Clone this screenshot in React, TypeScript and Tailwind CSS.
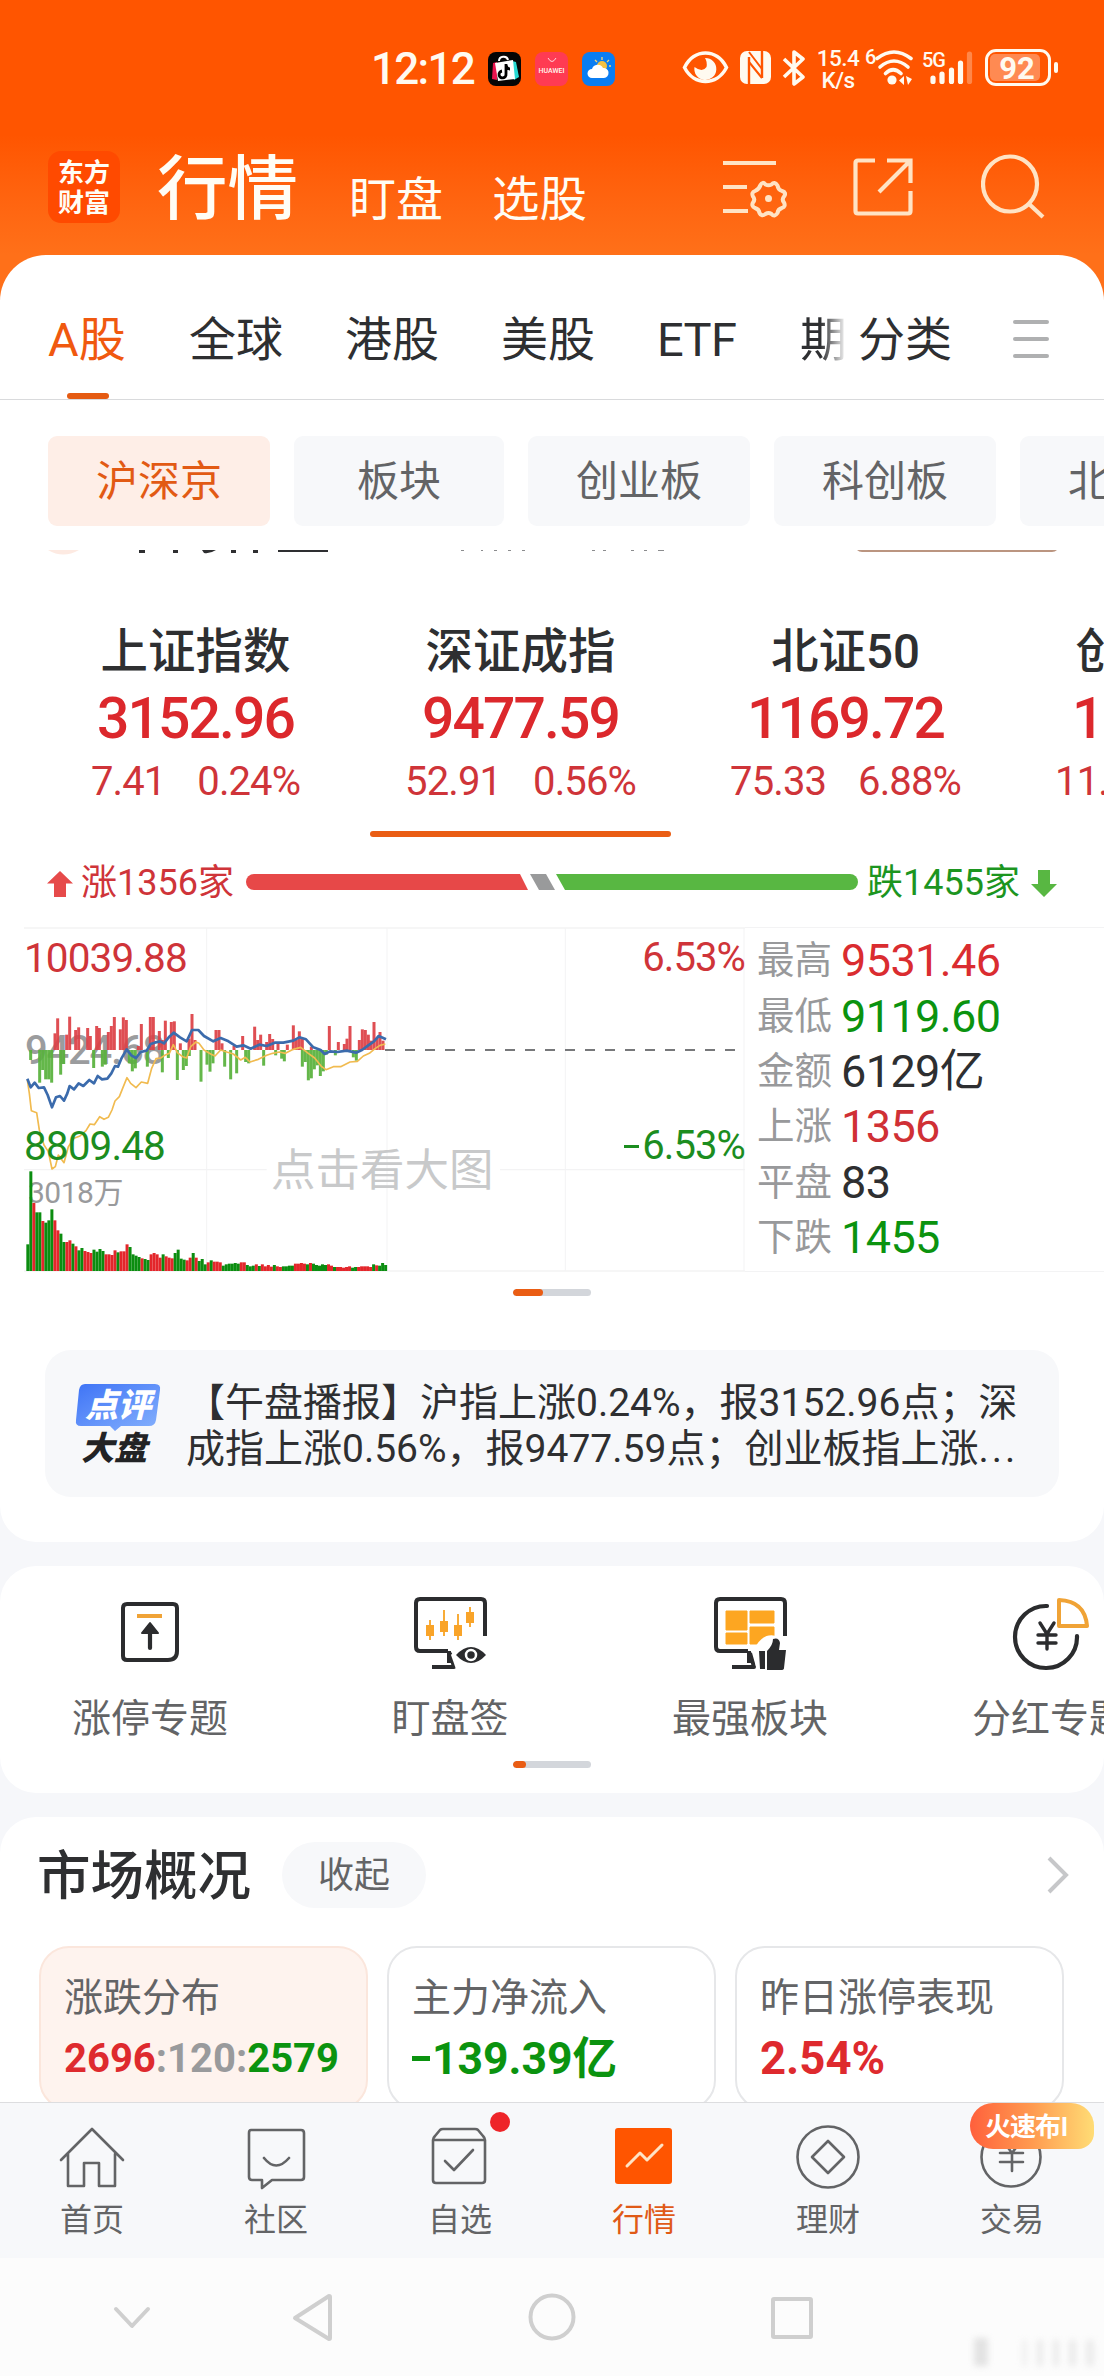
import React from "react";

/* ---------- data ---------- */

const tabs = ["全球", "港股", "美股"];

const indices = [
  { name: "上证指数", value: "3152.96", diff: "7.41", pct: "0.24%", active: false },
  { name: "深证成指", value: "9477.59", diff: "52.91", pct: "0.56%", active: true },
  { name: "北证50", value: "1169.72", diff: "75.33", pct: "6.88%", active: false },
  { name: "创业板指", value: "1866.07", diff: "11.35", pct: "0.61%", active: false },
];

const stats = [
  { label: "最高", value: "9531.46", tone: "text-[#da2c30]" },
  { label: "最低", value: "9119.60", tone: "text-[#0b930f]" },
  { label: "金额", value: "6129亿", tone: "text-[#2e2f31]" },
  { label: "上涨", value: "1356", tone: "text-[#d03035]" },
  { label: "平盘", value: "83", tone: "text-[#2e2f31]" },
  { label: "下跌", value: "1455", tone: "text-[#0b930f]" },
];

/* strength bars: [x, height]; chart units are thirds of a pixel */
const upBars: [number, number][] = [
  [165, 50], [173, 95], [200, 46], [209, 100], [227, 60], [236, 68], [263, 66], [271, 42], [290, 72], [298, 66],
  [325, 54], [334, 72], [343, 99], [361, 62], [370, 98], [379, 90], [415, 12], [424, 78], [451, 99], [460, 99],
  [478, 57], [487, 30], [496, 88], [514, 84], [523, 86], [541, 20], [567, 34], [576, 108], [585, 30], [648, 60],
  [657, 60], [666, 20], [702, 12], [728, 42], [764, 70], [773, 30], [782, 46], [800, 24], [809, 48], [818, 33],
  [834, 22], [862, 16], [880, 74], [889, 30], [898, 56], [907, 34], [934, 10], [988, 72], [1015, 24], [1033, 18],
  [1041, 34], [1050, 72], [1078, 30], [1087, 62], [1096, 60], [1105, 46], [1113, 28], [1122, 84], [1131, 36],
  [1140, 54], [1149, 28],
];
const downBars: [number, number][] = [
  [92, 30], [119, 98], [128, 60], [137, 88], [146, 88], [155, 98], [182, 74], [191, 42], [281, 54], [307, 50],
  [316, 44], [388, 40], [397, 64], [406, 55], [442, 50], [487, 67], [505, 24], [532, 90], [550, 60], [559, 48],
  [568, 18], [603, 95], [621, 44], [630, 65], [639, 40], [674, 50], [692, 88], [710, 70], [737, 36], [746, 40],
  [791, 47], [827, 16], [845, 26], [853, 34], [907, 50], [916, 36], [925, 91], [934, 85], [943, 58], [952, 46],
  [961, 78], [970, 64], [979, 14], [1006, 16], [1060, 22], [1069, 32],
];
const volumes = [
  80, 299, 204, 176, 176, 150, 145, 152, 185, 152, 122, 112, 87, 87, 92, 82, 74, 62, 69, 60, 57, 54, 64, 58, 66, 60, 50,
  50, 48, 62, 56, 59, 59, 80, 72, 50, 46, 42, 38, 36, 33, 50, 54, 50, 40, 50, 44, 40, 38, 54, 64, 37, 34, 32, 40, 54, 40,
  30, 36, 20, 26, 32, 28, 28, 26, 16, 20, 22, 22, 24, 22, 26, 26, 18, 14, 16, 20, 15, 20, 14, 18, 13, 18, 14, 12, 14, 14,
  16, 16, 22, 22, 24, 22, 20, 24, 22, 18, 16, 20, 18, 20, 16, 12, 12, 12, 10, 12, 14, 10, 12, 12, 14, 14, 14, 12, 20, 17,
  16, 24, 18,
];
const volumeColors =
  "GGRGGRGGGRRGGRRGRGGRRRGGGGRRRRGRRRGGGGRGGRRRRGRRRGGGGRRGRGGGRGRRRGGGGGGRRGGGRGRRRRGRRGGGGRRRRGRGGGGGRRGRRRRRGGRRRRRGRGGG";

const shortcuts = [
  { label: "涨停专题", icon: <LimitUpIcon /> },
  { label: "盯盘签", icon: <WatchIcon /> },
  { label: "最强板块", icon: <SectorIcon /> },
  { label: "分红专题", icon: <DividendIcon /> },
];

/* ---------- status bar ---------- */

function StatusBar() {
  return (
    <div className="flex h-[136px] items-start text-[#fffaf0]">
      <div className="ml-[371px] mt-[42px] w-[117px] whitespace-nowrap text-[44px] font-medium leading-[54px] tracking-[-1.7px]">12:12</div>
      <svg className="mt-[52px] h-[34px] w-[33px]" viewBox="0 0 33 34">
        <rect width="33" height="34" rx="8" fill="#050505" />
        <path d="M5 11l4-1v18l-5-1z" fill="#e9134f" />
        <path d="M24 9l4 1 3 15-5 3z" fill="#26d9d3" />
        <path d="M7 11l18-3 2 19-17 2z" fill="#fff" />
        <path d="M11 9c0-5 8-6 9-1" fill="none" stroke="#fff" strokeWidth="2" />
        <path d="M18 12v10a3.500 3.500 0 1 1-4-3M18 13q1 4 4 4" fill="none" stroke="#000" strokeWidth="2.800" />
      </svg>
      <div className="ml-[14px] mt-[52px] flex h-[34px] w-[33px] flex-col items-center rounded-lg bg-[#ff3b53]">
        <svg className="mt-[5px] h-[7px] w-[12px]" viewBox="0 0 12 7">
          <path d="M2 1q4 7 8 0" fill="none" stroke="#ffd5dc" />
        </svg>
        <span className="mt-[3px] text-[7px] font-medium leading-[9px]">HUAWEI</span>
      </div>
      <svg className="ml-[14px] mt-[52px] h-[34px] w-[33px]" viewBox="0 0 33 34">
        <rect width="33" height="34" rx="8" fill="#0a7df2" />
        <path d="M20 5v3M13 8l2 2M27 8l-2 2M29 14h-2M26 20l-1-1" stroke="#f5d77a" strokeWidth="1.300" />
        <circle cx="20" cy="14" r="5" fill="#f5c243" />
        <path d="M10 26a4.500 4.500 0 0 1 0-9 6 6 0 0 1 11-1 5 5 0 0 1 1 10z" fill="#fff" />
      </svg>
      <svg className="ml-[67px] mt-[51px] h-[33px] w-[47px]" viewBox="0 0 47 33">
        <path d="M2.500 16.500C12-3 35-3 44.500 16.500 35 35 12 35 2.500 16.500z" fill="none" stroke="currentColor" strokeWidth="3.500" />
        <path d="M23 7a11 11 0 1 1-10.500 9q8 6 12 0 1-5-1.500-9z" fill="currentColor" />
      </svg>
      <svg className="ml-[11px] mt-[51px] h-[33px] w-[31px]" viewBox="0 0 31 33">
        <rect width="31" height="33" rx="7" fill="currentColor" />
        <path d="M9 6v27M22 0v27" stroke="#ff5500" strokeWidth="2.400" />
        <path d="M9 1l13 17M9 11l13 16" stroke="#ff5500" strokeWidth="2" />
      </svg>
      <svg className="ml-[11px] mt-[50px] h-[36px] w-[24px]" viewBox="0 0 24 36">
        <path d="M2 9l19 18-9 7V2l9 7L2 27" fill="none" stroke="currentColor" strokeWidth="3.600" strokeLinejoin="round" />
      </svg>
      <div className="ml-[9px] mt-[47px] w-[46px] text-center text-[22.500px] font-medium leading-[22px] tracking-[-0.500px]">
        15.4
        <br />
        K/s
      </div>
      <div className="ml-[4px] mt-[46px] w-[10px] text-[20px] font-medium leading-[22px] tracking-[-1px]">6</div>
      <svg className="mt-[49px] h-[36px] w-[40px]" viewBox="0 0 40 36">
        <g fill="none" stroke="currentColor" strokeWidth="3.600" strokeLinecap="round">
          <path d="M2 9.500Q19-3.500 36 9.500" />
          <path d="M5 18Q19 6 33 18" />
          <path d="M10.500 24.500Q18 17 26 24.500" />
        </g>
        <circle cx="17" cy="31" r="4.600" fill="currentColor" />
        <path d="M29 27v9l-5-4.500zM31 27l6 3-4 6z" fill="currentColor" />
      </svg>
      <div className="relative ml-[7px] mt-[50px] h-[36px] w-[52px]">
        <span className="absolute left-0 top-[-1px] text-[20px] font-medium leading-[22px] tracking-[-1px]">5G</span>
        <svg className="h-[36px] w-[52px]" viewBox="0 0 52 36">
          <g stroke="currentColor" strokeWidth="5.200" strokeLinecap="round">
            <path d="M11 28v3.500M20 24v7.500M29.500 20v11.500M38.500 13v18.500" />
            <path d="M47.500 4v27.500" opacity="0.300" />
          </g>
        </svg>
      </div>
      <div className="ml-[11px] mt-[49px] flex h-[37px] w-[66px] rounded-[11px] border-[3px] border-[#fffaf0] p-[2px]">
        <div className="h-full w-[50px] rounded-[5px] bg-[#ff8a52] pl-[4px] text-center text-[31px] font-bold leading-[29px]">92</div>
      </div>
      <div className="ml-[3px] mt-[62px] h-[11px] w-[4px] rounded-full bg-[#fffaf0]" />
    </div>
  );
}

function TitleBar() {
  return (
    <div className="flex h-[119px] items-start text-[#fffdf5]">
      <div className="ml-[48px] mt-[15px] flex h-[72px] w-[72px] flex-col items-center rounded-[13px] bg-[#ff4a00] pt-[7px] text-[26px] font-bold leading-[30px]">
        <span>东方</span>
        <span>财富</span>
      </div>
      <div className="ml-[37px] mt-[16px] w-[192px] text-[70.500px] font-medium leading-[76px]">行情</div>
      <div className="mt-[32px] w-[143px] text-[47px] leading-[64px]">盯盘</div>
      <div className="mt-[32px] w-[231px] text-[47.500px] leading-[64px]">选股</div>
      <svg className="mt-[22px] h-[60px] w-[64px]" viewBox="0 0 64 60" fill="none" stroke="#ffe3c4" strokeWidth="4.200">
        <path d="M0 5h53M0 29h24M0 53h25" />
        <path
          d="M37.500 27q2-4 5 -0.500 3 1.500 6 0 3-3.500 6 1 0.500 4 4.500 5.500 5 1.500 2 5.500-2.500 3 0 6 2 4-2 5.500-4 1-4.500 5-3 4.500-6 1-3-2-6 0-4 3-6-1-0.500-4-4.500-5-4-2-2-5.500 2.500-3 0-6-2-4 2-5.500 4-1.500 5.500-6z"
          strokeLinejoin="round"
          strokeWidth="4"
        />
        <circle cx="45.500" cy="40.500" r="2.500" fill="#ffe3c4" strokeWidth="2" />
      </svg>
      <svg className="ml-[66px] mt-[20px] h-[62px] w-[60px]" viewBox="0 0 60 62" fill="none" stroke="#ffe3c4" strokeWidth="4.200">
        <path d="M22 4.500H5q-2.500 0-2.500 2.500v48q0 2.500 2.500 2.500h50q2.500 0 2.500-2.500V35" />
        <path d="M34 4.500h23.500V27M56 6L26 36" />
      </svg>
      <svg className="ml-[68px] mt-[18px] h-[66px] w-[64px]" viewBox="0 0 64 66" fill="none" stroke="#ffe3c4" strokeWidth="4.200">
        <ellipse cx="29" cy="30" rx="27" ry="27.500" />
        <path d="M47 49l15 14" />
      </svg>
    </div>
  );
}

/* ---------- tabs and pills ---------- */

function MarketTabs() {
  return (
    <div className="flex h-[145px] items-start border-b border-[#d9dadc] text-[47px] leading-[60px] text-[#2e2f31]">
      <div className="ml-[48px] mt-[55px] flex h-[89px] w-[141px] flex-col text-[#f0590f]">
        <span>A股</span>
        <span className="ml-[19px] mt-[23px] h-[6px] w-[42px] rounded-full bg-[#e55b12]" />
      </div>
      {tabs.map((t) => (
        <div key={t} className="mt-[55px] w-[156px]">{t}</div>
      ))}
      <div className="mt-[55px] w-[143px] tracking-[-0.600px]">ETF</div>
      <div className="mt-[55px] w-[58px] overflow-hidden bg-linear-to-r from-[#2e2f31] from-35% to-white to-80% bg-clip-text text-transparent">期</div>
      <div className="mt-[55px] w-[155px]">分类</div>
      <div className="mt-[65px] flex h-[38px] w-[36px] flex-col justify-between">
        <span className="h-[4px] rounded-full bg-[#afb0b1]" />
        <span className="h-[4px] rounded-full bg-[#afb0b1]" />
        <span className="h-[4px] rounded-full bg-[#afb0b1]" />
      </div>
    </div>
  );
}

function BoardPills() {
  return (
    <div className="flex h-[150px] gap-[24px] overflow-hidden pl-[48px] pt-[36px] text-[42px] leading-[92px] text-[#636466]">
      <div className="h-[90px] w-[222px] shrink-0 rounded-[9px] bg-[#feeee7] text-center text-[#e25a14]">沪深京</div>
      <div className="h-[90px] w-[210px] shrink-0 rounded-[9px] bg-[#f7f8fa] text-center">板块</div>
      <div className="h-[90px] w-[222px] shrink-0 rounded-[9px] bg-[#f7f8fa] text-center">创业板</div>
      <div className="h-[90px] w-[222px] shrink-0 rounded-[9px] bg-[#f7f8fa] text-center">科创板</div>
      <div className="h-[90px] w-[222px] shrink-0 rounded-[9px] bg-[#f7f8fa] pl-[48px]">北交所</div>
    </div>
  );
}

/* lower edge of the banner that has scrolled beneath the pills */
function ScrolledBanner() {
  return (
    <svg className="block h-[6px] w-full" viewBox="0 0 1104 6">
      <path d="M48 0q15 9 31 0z" fill="#fdeae2" />
      <path d="M139 0h6v3h-6zM173 0h5v3h-5zM202 0h14q-6 4-12 3zM231 0h5v3h-5zM253 0h5v3h-5zM278 0h50v2h-50z" fill="#2e2f31" />
      <path d="M461 0h3M481 0h2M494 0h3M508 0h3M522 0h3M592 0h3M603 0h3M631 0h3M644 0h3M658 0h6" stroke="#8b8c8e" strokeWidth="2" />
      <path d="M857 0h200q-2 2-5 2H862q-3 0-5-2z" fill="#bb9580" />
    </svg>
  );
}

/* ---------- indices ---------- */

function IndexStrip() {
  return (
    <div className="flex h-[281px] overflow-hidden pl-[33px]">
      {indices.map((q) => (
        <div key={q.name} className="flex w-[325px] shrink-0 flex-col items-center pt-[66px]">
          <div className="text-[47.500px] font-medium leading-[60px] text-[#2e2f31]">{q.name}</div>
          <div className="mt-[5px] text-[57px] font-medium leading-[64px] tracking-[-1.900px] text-[#dc282c]">{q.value}</div>
          <div className="mt-[7px] flex gap-[32px] text-[40px] leading-[48px] tracking-[-0.900px] text-[#cf3439]">
            <span>{q.diff}</span>
            <span>{q.pct}</span>
          </div>
          {q.active && <div className="mt-[25px] h-[6px] w-[301px] rounded-full bg-[#ea5d14]" />}
        </div>
      ))}
    </div>
  );
}

function BreadthBar() {
  return (
    <div className="flex h-[90px] items-start text-[36px] leading-[44px]">
      <svg className="ml-[47px] mt-[34px] h-[26px] w-[26px]" viewBox="0 0 26 26">
        <path d="M13 0l13 12.500h-7V26H7V12.500H0z" fill="#e64a4a" />
      </svg>
      <div className="ml-[8px] mt-[24px] w-[165px] text-[#cf3439]">涨1356家</div>
      <svg className="mt-[37px] h-[16px] w-[612px]" viewBox="0 0 612 16">
        <path d="M8 0h266l8 16H8A8 8 0 0 1 8 0z" fill="#e74848" />
        <path d="M284 0h16l9 16h-16z" fill="#999a9b" />
        <path d="M310 0h294a8 8 0 0 1 0 16H319z" fill="#58b742" />
      </svg>
      <div className="ml-[9px] mt-[24px] w-[164px] text-[#1c951f]">跌1455家</div>
      <svg className="mt-[33px] h-[27px] w-[26px]" viewBox="0 0 26 27">
        <path d="M13 27L0 14h7V0h12v14h7z" fill="#58b742" />
      </svg>
    </div>
  );
}

/* ---------- intraday chart ---------- */

function IntradayChart() {
  return (
    <div className="relative h-[345px] w-[745px]">
      <svg className="absolute inset-0 h-[345px] w-[745px]" viewBox="0 81 2235 1035">
        <g stroke="#f3f3f4" strokeWidth="4" fill="none">
          <path d="M72 84H2235M72 809H800M1500 809H2235M72 1113H2235" />
          <path d="M620 84V1113M1161 84V1113M1696 84V1113M2232 84V1113" strokeWidth="3" />
        </g>
        <path d="M1155 450H2210" stroke="#77787a" strokeWidth="6" strokeDasharray="30 30" />
      </svg>
      <div className="absolute left-[25px] top-[107px] text-[40px] font-medium leading-[34px] tracking-[-1.200px] text-[#9b9c9e]">9424.68</div>
      <div className="absolute left-[28px] top-[249px] text-[30px] leading-[34px] tracking-[-0.500px] text-[#999a9c]">3018万</div>
      <svg className="absolute inset-0 h-[345px] w-[745px]" viewBox="0 81 2235 1035">
        {upBars.map(([x, h]) => (
          <rect key={"u" + x} x={x - 4.5} y={450 - h} width="9" height={h} fill="#dd4146" opacity="0.93" />
        ))}
        {downBars.map(([x, h]) => (
          <rect key={"d" + x} x={x - 4.5} y="450" width="9" height={h} fill="#58b13c" opacity="0.93" />
        ))}
        {volumes.map((v, i) => (
          <rect key={i} x={79 + i * 9.02} y={1113 - v} width="9" height={v} fill={volumeColors[i] === "R" ? "#e3262b" : "#0b8d10"} />
        ))}
        <path
          d="M82 540L88 580 94 632 110 638 118 690 132 735 145 755 156 807 166 800 175 765 192 788 205 740 222 715 240 708 258 692 270 672 283 674 299 650 312 658 325 652 336 630 345 603 358 590 370 560 381 533 392 550 408 563 424 546 443 550 455 505 468 476 482 474 494 466 508 460 520 434 532 458 548 470 560 474 572 440 588 426 597 430 612 450 632 462 645 468 662 450 680 456 700 462 722 480 736 472 750 486 775 478 800 466 818 460 838 456 856 460 880 448 902 442 925 460 944 474 965 500 978 509 1000 500 1022 500 1050 486 1072 484 1090 468 1108 460 1125 446 1140 436 1156 432"
          fill="none"
          stroke="#f1bb50"
          strokeWidth="5"
          strokeLinejoin="round"
        />
        <path
          d="M82 536L92 562 104 548 116 564 132 562 143 585 156 622 168 592 180 588 192 602 202 580 209 558 222 568 236 550 250 558 268 540 282 550 293 528 306 538 322 536 334 520 345 498 354 500 364 476 380 448 394 466 408 474 422 456 440 452 452 432 464 428 480 424 492 430 508 410 521 398 540 412 560 424 576 390 595 390 612 408 640 424 662 414 682 422 710 440 730 436 752 446 778 434 800 438 824 428 850 428 880 422 898 412 918 418 940 442 962 450 974 462 990 454 1012 456 1040 452 1068 458 1086 450 1105 436 1122 424 1136 408 1158 418"
          fill="none"
          stroke="#3b6bac"
          strokeWidth="8"
          strokeLinejoin="round"
        />
      </svg>
      <div className="absolute left-[24px] top-[14px] text-[40.500px] leading-[34px] tracking-[-0.900px] text-[#cf3439]">10039.88</div>
      <div className="absolute right-0 top-[14px] text-[40px] leading-[34px] tracking-[-0.900px] text-[#cf3439]">6.53%</div>
      <div className="absolute left-[24px] top-[202px] text-[40.500px] leading-[34px] tracking-[-0.900px] text-[#1c8d1f]">8809.48</div>
      <div className="absolute right-0 top-[202px] text-[40px] leading-[34px] tracking-[-0.900px] text-[#1c8d1f]">
        <span className="mr-[3px] inline-block h-[3px] w-[15px] bg-[#1c8d1f] align-[11px]" />6.53%
      </div>
      <div className="absolute left-[271px] top-[220px] text-[44.500px] leading-[48px] text-[#c8c9ca]">点击看大图</div>
    </div>
  );
}

function ChartPanel() {
  return (
    <div className="flex h-[345px]">
      <IntradayChart />
      <div className="flex flex-1 flex-col border-y border-[#f3f3f4] pl-[12px] pt-[5px]">
        {stats.map((s) => (
          <div key={s.label} className="flex h-[55.400px] items-center leading-[55px]">
            <span className="w-[84px] text-[37.500px] text-[#98999b]">{s.label}</span>
            <span className={"text-[45px] tracking-[-0.600px] " + s.tone}>{s.value}</span>
          </div>
        ))}
      </div>
    </div>
  );
}

function Pager({ short = false }: { short?: boolean }) {
  return (
    <div className="mx-auto h-[7px] w-[78px] overflow-hidden rounded-full bg-[#d3d6db]">
      <div className={(short ? "w-[13px]" : "w-[30px]") + " h-full rounded-full bg-[#ea5d14]"} />
    </div>
  );
}

function Commentary() {
  return (
    <div className="mx-[45px] flex h-[147px] w-[1014px] rounded-[26px] bg-[#f7f8fa]">
      <div className="ml-[30px] mt-[34px] flex w-[111px] flex-col">
        <div className="relative h-[42px] w-[86px]">
          <svg className="absolute inset-0 h-[48px] w-[86px]" viewBox="0 0 86 48">
            <defs>
              <linearGradient id="tag" x1="0" y1="0" x2="1" y2="1">
                <stop offset="0" stopColor="#3f74f6" />
                <stop offset="1" stopColor="#85b1fd" />
              </linearGradient>
            </defs>
            <path d="M10 0h70q6 0 5 6l-4 30q-1 6-7 6H46l-6 5-5-5H6q-6 0-5-6L4 6q1-6 6-6z" fill="url(#tag)" />
          </svg>
          <span className="absolute inset-0 text-center text-[33px] font-black italic leading-[44px] text-white">点评</span>
        </div>
        <span className="ml-[6px] mt-[4px] text-[33px] font-black italic leading-[38px] text-[#222325]">大盘</span>
      </div>
      <div className="mt-[30px] whitespace-nowrap text-[39px] leading-[46px] text-[#2e2f31]">
        <div>【午盘播报】沪指上涨0.24%，报3152.96点；深</div>
        <div>
          成指上涨0.56%，报9477.59点；创业板指上涨<span className="tracking-[3px]">...</span>
        </div>
      </div>
    </div>
  );
}

/* ---------- shortcuts ---------- */

function LimitUpIcon() {
  return (
    <svg className="h-[76px] w-[78px]" viewBox="0 0 78 76" fill="none">
      <path d="M14 10h46q4 0 4 4v43q0 9-9 9H14q-4 0-4-4V14q0-4 4-4z" transform="translate(2 0)" stroke="#2b2c2e" strokeWidth="4" />
      <path d="M26 22h25" stroke="#f0a336" strokeWidth="4" />
      <path d="M39 54V36" stroke="#2b2c2e" strokeWidth="4.200" strokeLinecap="round" />
      <path d="M39 29l8 10H31z" fill="#2b2c2e" stroke="#2b2c2e" strokeWidth="2" strokeLinejoin="round" />
    </svg>
  );
}

function MonitorFrame() {
  return (
    <g stroke="#2b2c2e" strokeWidth="4" fill="none">
      <path d="M73 42V9q0-4-4-4H8Q4 5 4 9v44q0 4 4 4h28M37 57v12M20 73h22l-4-14" strokeLinejoin="round" transform="translate(1 0)" />
    </g>
  );
}

function WatchIcon() {
  return (
    <svg className="h-[78px] w-[78px]" viewBox="0 0 78 78" fill="none">
      <MonitorFrame />
      <path d="M19 26v20M33 16v26M47 20v26M59 13v20" stroke="#f8ac38" strokeWidth="2" />
      <path d="M15 31h8v11h-8zM29 27h8v11h-8zM43 31h8v11h-8zM55 18h8v11h-8z" fill="#f9a429" />
      <path d="M40 61Q60 32 78 61v17H46z" fill="#fff" />
      <path d="M45 61Q60 45 75 61 60 77 45 61z" fill="#2b2c2e" />
      <circle cx="60" cy="61" r="5" fill="#2b2c2e" stroke="#fff" strokeWidth="2.500" />
    </svg>
  );
}

function SectorIcon() {
  return (
    <svg className="h-[78px] w-[78px]" viewBox="0 0 78 78" fill="none">
      <MonitorFrame />
      <path d="M15 17h21v19H15zM39 17h24v12H39zM15 39h21v11H15zM39 33h24v17H39z" fill="#fda621" stroke="#fda621" strokeWidth="1" strokeLinejoin="round" />
      <path d="M42 57Q52 36 68 43L78 54v24H46z" fill="#fff" />
      <path d="M48 57h6v18h-5zM56 57q6-6 6-12 6-2 7 4l-1 7h7l-2 18q0 2-3 2H56z" fill="#2b2c2e" />
    </svg>
  );
}

function DividendIcon() {
  return (
    <svg className="h-[78px] w-[78px]" viewBox="0 0 78 78" fill="none">
      <path d="M36 12a31 31 0 1 0 30 30" stroke="#2b2c2e" strokeWidth="4.200" strokeLinecap="round" />
      <path d="M48 6q26 1 28 26H48z" stroke="#f0a336" strokeWidth="4" strokeLinejoin="round" />
      <path d="M29 29l7 11 7-11M27 41h18M27 49h18M36 40v15" stroke="#2b2c2e" strokeWidth="3.400" strokeLinecap="round" />
    </svg>
  );
}

/* ---------- bottom tabs ---------- */

function TabItem({ label, active = false, children }: { label: string; active?: boolean; children: React.ReactNode }) {
  return (
    <div className="relative flex w-[184px] flex-col items-center pt-[18px]">
      <svg className="h-[70px] w-[70px]" viewBox="0 0 70 70" fill="none" stroke="#636466" strokeWidth="2.600" strokeLinejoin="round" strokeLinecap="round">
        {children}
      </svg>
      <span className={"mt-[8px] text-[32px] leading-[42px] " + (active ? "text-[#e05a17]" : "text-[#636466]")}>{label}</span>
    </div>
  );
}

function BottomTabs() {
  return (
    <div className="flex h-[156px] border-t border-[#dcdddf] bg-[#f7f8fa]">
      <TabItem label="首页">
        <path d="M4 39L35 8l31 31M11 33v32h16V42h15v23h16V33" />
      </TabItem>
      <TabItem label="社区">
        <path d="M10 9h50q3 0 3 3v44q0 3-3 3H31l-10 8v-8H11q-3 0-3-3V12q0-3 2-3zM23 37q12 15 25 0" />
      </TabItem>
      <TabItem label="自选">
        <path d="M8 19v40q0 3 3 3h46q3 0 3-3V19q0-2-2-4l-5-6q-1-1-3-1H18q-2 0-3 1l-5 6q-2 2-2 4zM8 19h52M20 40l9 9 19-20" />
      </TabItem>
      <div className="relative w-0">
        <span className="absolute left-[-62px] top-[9px] h-[20px] w-[20px] rounded-full bg-[#ee2429]" />
      </div>
      <TabItem label="行情" active>
        <rect x="6" y="7" width="57" height="56" rx="3" fill="#ff5500" stroke="none" />
        <path d="M18 45l13-13 7 7 15-15" stroke="#ffe3c4" strokeWidth="3" />
      </TabItem>
      <TabItem label="理财">
        <circle cx="35" cy="36" r="30.500" />
        <path d="M35 20l16 16-16 16-16-16z" />
      </TabItem>
      <div className="relative">
        <TabItem label="交易">
          <circle cx="34" cy="36" r="29.500" />
          <path d="M26 20l9 12 9-12M23 32h23M23 41h23M35 32v18" />
        </TabItem>
        <div className="absolute left-[50px] top-0 h-[46px] w-[124px] overflow-hidden rounded-[23px] rounded-br-[16px] bg-linear-to-r from-[#ff5f3c] via-[#ff9a50] to-[#ffdc75] pl-[15px] text-[26px] font-bold leading-[48px] text-white">
          <span className="tracking-[-1px]">火速布</span>
          <span className="ml-[1px]">l</span>
        </div>
      </div>
    </div>
  );
}

function SystemNav() {
  return (
    <div className="relative h-[118px] bg-[#fcfcfc]">
      <svg className="block h-[118px] w-full" viewBox="0 0 1104 118" fill="none" stroke="#cfcfcf" strokeWidth="4" strokeLinejoin="round" strokeLinecap="round">
        <path d="M116 51l16 17 16-17" />
        <path d="M329 38q1 0 1 1v41q0 1-1 1L295 60z" />
        <circle cx="552" cy="59" r="21.500" />
        <rect x="773" y="41" width="38" height="38" rx="1" />
      </svg>
      <div className="absolute bottom-[10px] right-[10px] flex h-[30px] items-end gap-[10px] opacity-40 blur-[3px]">
        <span className="h-[28px] w-[14px] bg-[#bdbdbd]" />
        <span className="ml-[24px] h-[26px] w-[5px] bg-[#dcdcdc]" />
        <span className="h-[26px] w-[6px] bg-[#cfcfcf]" />
        <span className="h-[26px] w-[6px] bg-[#cfcfcf]" />
        <span className="h-[26px] w-[7px] bg-[#cfcfcf]" />
        <span className="h-[26px] w-[8px] bg-[#d2d2d2]" />
      </div>
    </div>
  );
}

/* ---------- page ---------- */

export default function App() {
  return (
    <div className="flex h-[2376px] w-[1104px] flex-col overflow-hidden bg-[#f6f7fa] font-['Roboto','Noto_Sans_CJK_SC',sans-serif]">
      <div className="h-[300px] shrink-0 bg-linear-to-b from-[#ff5500] from-45% to-[#ff7019] to-85%">
        <StatusBar />
        <TitleBar />
      </div>

      <section className="-mt-[45px] h-[1287px] shrink-0 overflow-hidden rounded-t-[46px] rounded-b-[36px] bg-white">
        <MarketTabs />
        <BoardPills />
        <ScrolledBanner />
        <IndexStrip />
        <BreadthBar />
        <ChartPanel />
        <div className="h-[78px] pt-[17px]">
          <Pager />
        </div>
        <Commentary />
      </section>

      <section className="mt-[24px] h-[227px] shrink-0 overflow-hidden rounded-[36px] bg-white">
        <div className="flex h-[195px] w-[1200px]">
          {shortcuts.map((s) => (
            <div key={s.label} className="flex w-[300px] flex-col items-center pt-[28px]">
              <div className="flex h-[78px] items-start justify-center">{s.icon}</div>
              <div className="mt-[21px] text-[39px] leading-[52px] text-[#636466]">{s.label}</div>
            </div>
          ))}
        </div>
        <Pager short />
      </section>

      <section className="mt-[24px] h-[285px] shrink-0 overflow-hidden rounded-t-[36px] bg-white">
        <div className="flex h-[129px] items-start">
          <h2 className="ml-[37px] mt-[27px] w-[245px] text-[53.500px] font-medium leading-[66px] text-[#2e2f31]">市场概况</h2>
          <div className="mt-[25px] h-[66px] w-[144px] rounded-full bg-[#f7f8fa] text-center text-[36px] leading-[68px] text-[#636466]">收起</div>
          <svg className="ml-[620px] mt-[38px] h-[40px] w-[26px]" viewBox="0 0 26 40">
            <path d="M3 3l17 17L3 37" fill="none" stroke="#c6c7c9" strokeWidth="4" />
          </svg>
        </div>
        <div className="flex gap-[19px] pl-[39px] text-[39px] leading-[50px] text-[#636466]">
          <div className="h-[164px] w-[329px] rounded-[30px] border-2 border-[#fbe6dc] bg-[#fef3ee] pl-[23px] pt-[25px]">
            <div>涨跌分布</div>
            <div className="mt-[10px] text-[40px] font-bold leading-[52px]">
              <span className="text-[#de2a2e]">2696</span>
              <span className="text-[#999a9c]">:120:</span>
              <span className="text-[#0b930f]">2579</span>
            </div>
          </div>
          <div className="h-[164px] w-[329px] rounded-[30px] border-2 border-[#e6e7e9] pl-[23px] pt-[25px]">
            <div>主力净流入</div>
            <div className="mt-[10px] text-[44.500px] font-bold leading-[52px] text-[#0b930f]">
              <span className="mr-[2px] inline-block h-[5px] w-[18px] bg-[#0b930f] align-[13px]" />139.39亿
            </div>
          </div>
          <div className="h-[164px] w-[329px] rounded-[30px] border-2 border-[#e6e7e9] pl-[23px] pt-[25px]">
            <div>昨日涨停表现</div>
            <div className="mt-[10px] text-[45.500px] font-bold leading-[52px] text-[#de2a2e]">2.54%</div>
          </div>
        </div>
      </section>

      <div className="shrink-0">
        <BottomTabs />
        <SystemNav />
      </div>
    </div>
  );
}
